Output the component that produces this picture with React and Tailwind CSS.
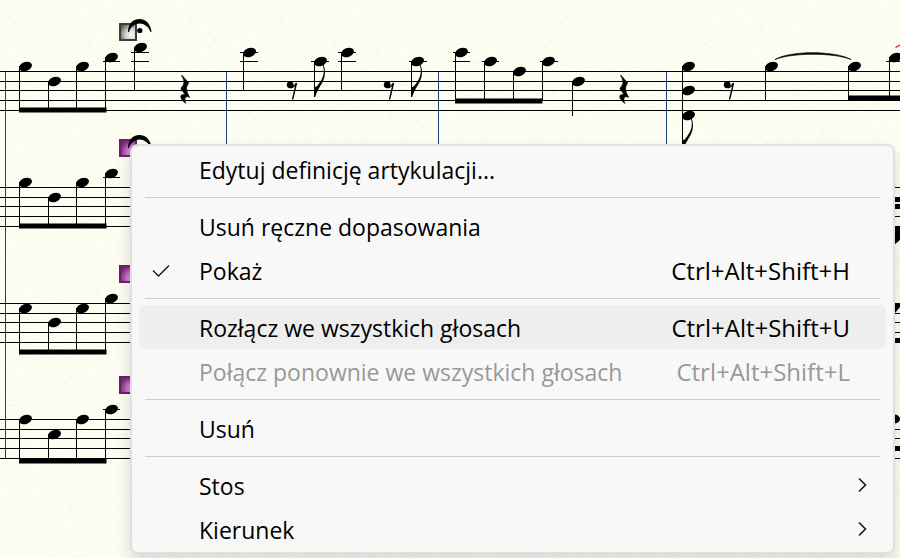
const STAVES = [71, 187, 303, 419];
const LINE_OFFSETS = [0, 10, 19, 29, 39];

const BEAMED_BARS = [
  { notes: [[25, 66], [54, 81], [82, 66], [111, 57]], beam: 110 },
  { notes: [[25, 182], [54, 197], [82, 182], [111, 173]], beam: 226 },
  { notes: [[25, 308], [54, 322], [82, 308], [111, 298]], beam: 352 },
  { notes: [[25, 419], [54, 434], [82, 419], [111, 409]], beam: 461 },
  { notes: [[461, 52], [490, 61], [519, 71], [548, 61]], beam: 101 },
];

const LEDGERS = [
  [103, 61, 17], [131, 52, 18], [131, 61, 18],
  [240, 52, 18], [240, 61, 18], [311, 61, 18], [338, 52, 18], [338, 61, 18], [409, 61, 18],
  [453, 52, 17], [453, 61, 17], [482, 61, 17], [540, 61, 18],
  [886, 61, 14], [103, 177, 17], [103, 409, 17],
];

const BARLINES = [226, 438, 666];

function Head({ x, y }) {
  return <ellipse cx={x + 0.5} cy={y + 0.5} rx="6.7" ry="4.5" transform={`rotate(-20 ${x + 0.5} ${y + 0.5})`} />;
}

function Stem({ x, from, to }) {
  return <rect x={x} y={from} width="1" height={to - from} shapeRendering="crispEdges" />;
}

function Note({ x, y, to }) {
  return (
    <g>
      <Head x={x} y={y} />
      <Stem x={x - 6} from={y} to={to} />
    </g>
  );
}

function Flag({ x, y }) {
  return (
    <g transform={`translate(${x} ${y})`}>
      <path d="M0 0V-10H2C6-14 9.500-20 9.800-25C10-28 9.500-30 8.500-32L9.500-32.500C11.500-27 11.500-22 9.500-17C7.500-12 3.500-8 1.200 0Z" />
    </g>
  );
}

function QuarterRest({ x, y }) {
  return (
    <path
      transform={`translate(${x} ${y})`}
      d="M1.800 0L8.800 8C5.500 12.500 6 15.500 9.800 22.500C6 20.500 3.500 23 6 28.500C.5 25-2 18.500 4.800 19.500C3 16 .5 14.500 1 13C4.500 9.500 5 6 1.500 .8Z"
      stroke="#000"
      strokeWidth="0.500"
    />
  );
}

function EighthRest({ x, y }) {
  return (
    <g transform={`translate(${x} ${y})`}>
      <circle cx="3.200" cy="3.800" r="3.400" />
      <path d="M4 6.800C7 6 8.500 4 9.500 2L5.500 18.500" fill="none" stroke="#000" strokeWidth="1.400" />
    </g>
  );
}

function Fermata({ x, y }) {
  return (
    <g transform={`translate(${x} ${y})`}>
      <path d="M0 13C0-4.500 22.500-4.500 23.500 13H22.500C18.500 1.500 4.500 1.500 1 13Z" />
      <circle cx="11.800" cy="11.500" r="2.600" />
    </g>
  );
}

function Handle({ x, y, color, fill }) {
  return (
    <g>
      <rect x={x} y={y} width="18" height="18" fill={color} />
      <rect x={x + 2} y={y + 2} width="14" height="14" fill={fill} />
    </g>
  );
}

function Score() {
  return (
    <svg className="block h-[558px] w-full" viewBox="0 0 900 558" preserveAspectRatio="xMinYMin slice" aria-hidden="true">
      <defs>
        <radialGradient id="pinkHandle" cx="0.85" cy="0.8" r="0.95">
          <stop offset="0" stopColor="#e9a4e6" />
          <stop offset="0.5" stopColor="#c26fbf" />
          <stop offset="1" stopColor="#752673" />
        </radialGradient>
        <radialGradient id="grayHandle" cx="0.75" cy="0.7" r="0.9">
          <stop offset="0" stopColor="#fbfbf8" />
          <stop offset="0.5" stopColor="#cfcfcd" />
          <stop offset="1" stopColor="#5c5c5c" />
        </radialGradient>
        <filter id="paper" x="0" y="0" width="100%" height="100%">
          <feTurbulence type="fractalNoise" baseFrequency="0.25 0.45" numOctaves="2" seed="4" />
          <feColorMatrix values="0 0 0 0 0.55  0 0 0 0 0.55  0 0 0 0 0.4  0.22 0 0 0 -0.08" />
        </filter>
      </defs>
      <rect width="900" height="558" fill="#fefef3" />
      <rect width="900" height="558" filter="url(#paper)" />

      <g fill="#1f3f78" shapeRendering="crispEdges">
        <rect x="5" y="71" width="1" height="388" />
        {BARLINES.map((x) => <rect key={x} x={x} y="71" width="1" height="388" />)}
      </g>
      <g fill="#000" shapeRendering="crispEdges">
        {STAVES.map((top) => LINE_OFFSETS.map((o) => <rect key={top + o} x="0" y={top + o} width="900" height="1" />))}
        {LEDGERS.map(([x, y, w]) => <rect key={`${x}-${y}`} x={x} y={y} width={w} height="1" />)}
      </g>

      <Handle x={119} y={23} color="#3c3c3c" fill="url(#grayHandle)" />
      {[139, 265, 376].map((y) => <Handle key={y} x={119} y={y} color="#6a2068" fill="url(#pinkHandle)" />)}
      <Fermata x={128} y={19} />
      <Fermata x={128} y={135} />

      {BEAMED_BARS.map(({ notes, beam }) => (
        <g key={`${notes[0][0]}-${beam}`}>
          {notes.map(([x, y]) => <Note key={x} x={x} y={y} to={beam} />)}
          <rect x={notes[0][0] - 6} y={beam - 2.5} width="87.500" height="5" />
        </g>
      ))}
      <Note x={140} y={47} to={90} />
      <Note x={249} y={52} to={90} />
      <Note x={320} y={61} to={96} />
      <Flag x={314} y={97} />
      <Note x={347} y={52} to={90} />
      <Note x={417} y={61} to={96} />
      <Flag x={411} y={97} />
      <Note x={578} y={81} to={116} />
      <Note x={688} y={66} to={150} />
      <Head x={688} y={90} />
      <Head x={688} y={115} />
      <Flag x={682} y={150} />
      <Note x={771} y={66} to={100} />
      <Note x={854} y={66} to={100} />
      <Note x={895} y={57} to={100} />
      <rect x="848" y="95.500" width="52" height="5" />
      <path d="M775 59.500C790 50.500 835 50.500 851 59.500C834 52.500 792 52.500 775 59.500Z" stroke="#000" strokeWidth="0.700" />
      <path d="M895.500 47.500L900 45" stroke="#c2183d" strokeWidth="1.200" />

      <QuarterRest x={180} y={75} />
      <QuarterRest x={619} y={75} />
      <EighthRest x={287} y={81} />
      <EighthRest x={384} y={81} />
      <EighthRest x={724} y={81} />

      <rect x="894" y="197" width="6" height="5" />
      <rect x="894" y="204" width="6" height="5" />
      <path d="M894 226H900V240L894 245Z" />
      <path d="M894 303H900V307L895 313H894Z" />
      <rect x="894" y="338" width="6" height="5" />
      <ellipse cx="894" cy="419" rx="6" ry="4.500" />
      <rect x="894" y="446" width="6" height="5" />
    </svg>
  );
}

function Check() {
  return (
    <svg className="h-4 w-5" viewBox="0 0 20 16" fill="none" stroke="#1a1a1a" strokeWidth="1.500" aria-hidden="true">
      <path d="M2 8.500L7.500 14L18 3.500" />
    </svg>
  );
}

function Chevron() {
  return (
    <svg className="h-4 w-4" viewBox="0 0 16 16" fill="none" stroke="#1a1a1a" strokeWidth="1.600" aria-hidden="true">
      <path d="M5 1.500L11.500 8L5 14.500" />
    </svg>
  );
}

function Item({ label, shortcut, checked, active, disabled, submenu }) {
  const tone = disabled ? "text-[#989898]" : "text-black";
  return (
    <button
      type="button"
      role={checked ? "menuitemcheckbox" : "menuitem"}
      aria-checked={checked ? true : undefined}
      aria-haspopup={submenu ? "menu" : undefined}
      disabled={disabled}
      className={`flex h-11 w-full items-center rounded-md pr-4 pl-3 text-left whitespace-nowrap ${tone} ${active ? "bg-[#eeeeee]" : ""}`}
    >
      <span className="w-12 shrink-0">{checked && <Check />}</span>
      <span className="flex-1 pt-0.5">{label}</span>
      {shortcut && <span className="pt-0.5 pr-5 text-2xl">{shortcut}</span>}
      {submenu && <Chevron />}
    </button>
  );
}

function Separator() {
  return <hr className="mx-1.5 my-1.5 border-t border-[#cfcfcf]" />;
}

export default function App() {
  return (
    <main className="relative overflow-hidden bg-[#fefef3]">
      <Score />
      <div
        role="menu"
        aria-label="Artykulacja"
        className="absolute top-36 right-[5px] left-[130px] rounded-lg border-2 border-[#e0e0e0] bg-[#f8f8f8] px-[7px] py-px font-['Open_Sans','Noto_Sans',sans-serif] text-[23px] leading-8 shadow-[0_8px_16px_rgba(0,0,0,0.14)]"
      >
        <Item label="Edytuj definicję artykulacji..." />
        <Separator />
        <Item label="Usuń ręczne dopasowania" />
        <Item label="Pokaż" shortcut="Ctrl+Alt+Shift+H" checked />
        <Separator />
        <Item label="Rozłącz we wszystkich głosach" shortcut="Ctrl+Alt+Shift+U" active />
        <Item label="Połącz ponownie we wszystkich głosach" shortcut="Ctrl+Alt+Shift+L" disabled />
        <Separator />
        <Item label="Usuń" />
        <Separator />
        <Item label="Stos" submenu />
        <Item label="Kierunek" submenu />
      </div>
    </main>
  );
}
